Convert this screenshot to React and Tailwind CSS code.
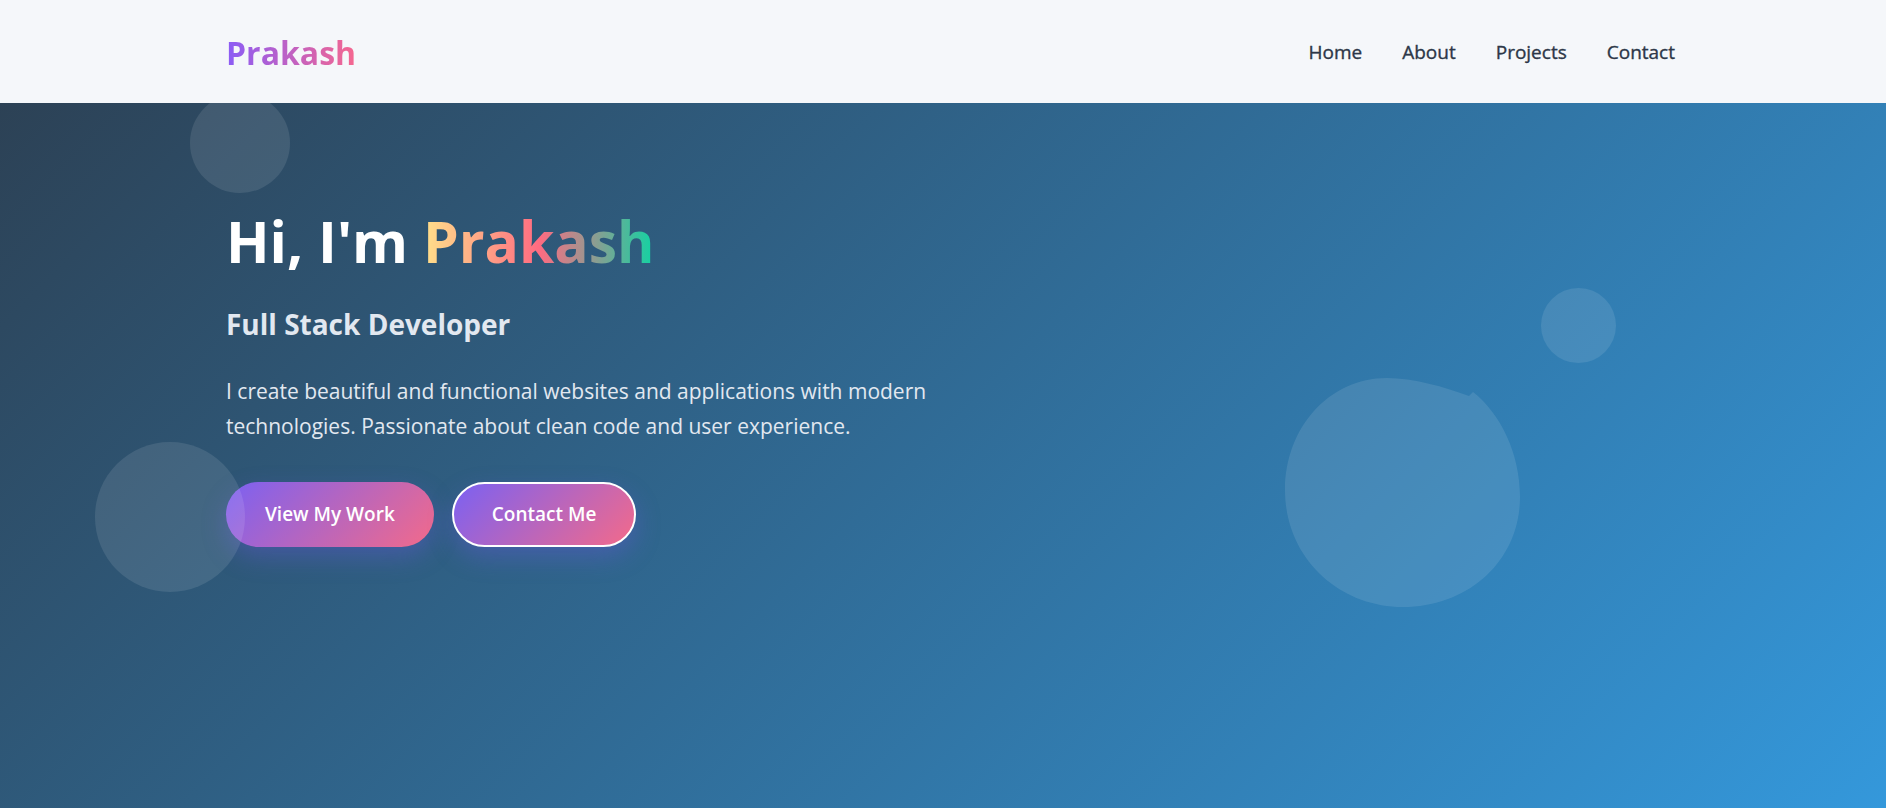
import React from 'react';

const links = ['Home', 'About', 'Projects', 'Contact'];

function Blob() {
    return (
        <svg viewBox="0 0 235 229" className="w-[235px] h-[229px]">
            <path
                d="M102,0 C128,0 160,9 184,18 L188,14 C216,36 235,76 235,119 C235,182 184,229 118,229 C54,229 0,180 0,112 C0,50 44,0 102,0 Z"
                fill="rgba(255,255,255,0.1)"
            />
        </svg>
    );
}

export default function App() {
    return (
        <div className="relative min-h-screen h-[808px] overflow-hidden bg-[linear-gradient(135deg,#2c3e50_0%,#3498db_100%)] font-['Open_Sans',sans-serif]">
            <header className="relative z-20 h-[103px] bg-[#f5f7fa] flex items-center justify-between pl-[226px] pr-[211px]">
                <a className="mt-[2px] text-[32px] font-bold leading-none bg-[linear-gradient(90deg,#8b5cf6,#f5678f)] bg-clip-text text-transparent">Prakash</a>
                <nav className="mt-[2px] flex gap-[40px] text-[19px] font-medium text-[#2d3748]">
                    {links.map((l) => (
                        <a key={l} className="[-webkit-text-stroke:0.35px_#2d3748]">
                            {l}
                        </a>
                    ))}
                </nav>
            </header>

            <div className="absolute left-[190px] top-[93px] w-[100px] h-[100px] rounded-full bg-white/10 z-10"></div>
            <div className="absolute left-[95px] top-[442px] w-[150px] h-[150px] rounded-full bg-white/10 z-10"></div>
            <div className="absolute left-[1541px] top-[288px] w-[75px] h-[75px] rounded-full bg-white/10 z-10"></div>
            <div className="absolute left-[1285px] top-[378px] z-10">
                <Blob />
            </div>

            <section className="pl-[226px] pt-[104px]">
                <h1 className="text-[57px] leading-[1.2] font-bold text-white">
                    Hi, I'm{' '}
                    <span className="bg-[linear-gradient(90deg,#ffe08a,#ff6b81_50%,#10d3a3)] bg-clip-text text-transparent">Prakash</span>
                </h1>
                <h2 className="mt-[31px] text-[28px] leading-[1.3] font-bold text-[#e2e8f0]">Full Stack Developer</h2>
                <p className="mt-[31px] max-w-[800px] text-[21px] leading-[35px] text-[#e2e8f0]">
                    I create beautiful and functional websites and applications with modern technologies. Passionate about clean code and user
                    experience.
                </p>
                <div className="mt-[38px] flex gap-[18px]">
                    <button className="h-[65px] px-[39px] rounded-full bg-[linear-gradient(135deg,#7b61f2,#f36a8a)] text-white text-[19px] font-semibold shadow-[0_10px_25px_rgba(110,90,230,0.35)]">
                        View My Work
                    </button>
                    <button className="h-[65px] px-[38px] rounded-full border-2 border-white bg-[linear-gradient(135deg,#7b61f2,#f36a8a)] text-white text-[19px] font-semibold shadow-[0_10px_25px_rgba(110,90,230,0.35)]">
                        Contact Me
                    </button>
                </div>
            </section>
        </div>
    );
}
